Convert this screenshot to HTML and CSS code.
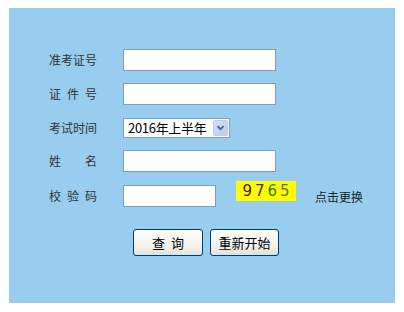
FILE: index.html
```html
<!DOCTYPE html>
<html lang="zh-CN">
<head>
<meta charset="utf-8">
<title>成绩查询</title>
<link rel="stylesheet" href="styles.css">
</head>
<body>
<div class="page">
  <form class="panel">
    <div class="rows">
      <div class="row">
        <label class="lbl">准考证号</label>
        <input class="txt" type="text">
      </div>
      <div class="row">
        <label class="lbl">证件号</label>
        <input class="txt" type="text">
      </div>
      <div class="row">
        <label class="lbl">考试时间</label>
        <div class="sel">
          <span class="sel-text">2016年上半年</span>
          <span class="sel-btn">
            <svg width="15" height="15" viewBox="0 0 15 15">
              <path d="M4 6 L7.5 9.5 L11 6" fill="none" stroke="#4d6185" stroke-width="2"/>
            </svg>
          </span>
        </div>
      </div>
      <div class="row">
        <label class="lbl">姓名</label>
        <input class="txt" type="text">
      </div>
      <div class="row row-code">
        <label class="lbl">校验码</label>
        <input class="txt short" type="text">
        <span class="captcha"><span class="d1">9</span><span class="d2">7</span><span class="d3">6</span><span class="d4">5</span></span>
        <span class="refresh">点击更换</span>
      </div>
    </div>
    <div class="actions">
      <button type="button" class="btn btn-q">查&nbsp;&nbsp;询</button>
      <button type="button" class="btn btn-r">重新开始</button>
    </div>
  </form>
</div>
</body>
</html>
```
FILE: styles.css
```css
html, body {
  margin: 0;
  padding: 0;
  background: #ffffff;
}
.page {
  padding: 8px 9px 9px 9px;
  font-family: "Noto Sans CJK SC", "Liberation Sans", sans-serif;
}
.panel {
  width: 386px;
  height: 295px;
  background: #98cdef;
  box-sizing: border-box;
  padding-top: 35px;
  margin: 0;
}
.rows {
  display: grid;
  grid-template-rows: 34px 34px 33px 33px 38px;
}
.row {
  display: flex;
  align-items: center;
  padding-left: 40px;
}
.lbl {
  width: 48px;
  margin-right: 26px;
  font-size: 12px;
  line-height: 14px;
  color: #333333;
  text-align: justify;
  text-align-last: justify;
}
.txt {
  width: 153px;
  height: 22px;
  box-sizing: border-box;
  border: 1px solid #7f9db9;
  background: #ffffff;
  margin: 0;
  padding: 0 2px;
  outline: none;
}
.txt.short {
  width: 93px;
}
.sel {
  width: 107px;
  height: 20px;
  box-sizing: border-box;
  border: 1px solid #7f9db9;
  background: #ffffff;
  display: flex;
  align-items: center;
  justify-content: space-between;
  padding: 0 1px 0 4px;
}
.sel-text {
  font-size: 13px;
  line-height: 16px;
  color: #000000;
  letter-spacing: -0.3px;
}
.sel-btn {
  width: 15px;
  height: 16px;
  box-sizing: border-box;
  border: 1px solid #b9cbf3;
  border-radius: 2px;
  background: linear-gradient(135deg, #d6e2fb 0%, #b6caf6 100%);
  display: flex;
  align-items: center;
  justify-content: center;
}
.sel-btn svg {
  display: block;
}
.captcha {
  width: 60px;
  height: 20px;
  background: #ffff00;
  margin-left: 20px;
  align-self: flex-start;
  margin-top: 4px;
  display: flex;
  align-items: center;
  justify-content: center;
  gap: 3px;
  font-family: "DejaVu Sans", sans-serif;
  font-size: 15px;
  line-height: 20px;
}
.d1 { color: #4a1500; }
.d2 { color: #4b2a08; }
.d3 { color: #3f7a10; }
.d4 { color: #6a6e1c; }
.refresh {
  margin-left: 19px;
  margin-top: 2px;
  font-size: 12px;
  line-height: 14px;
  color: #222222;
}
.actions {
  display: flex;
  gap: 7px;
  padding-left: 124px;
  margin-top: 14px;
}
.btn {
  height: 27px;
  box-sizing: border-box;
  border: 1px solid #003c74;
  border-radius: 3px;
  background: linear-gradient(180deg, #ffffff 0%, #f4f3ee 60%, #e3e1d6 100%);
  font-family: "Noto Sans CJK SC", sans-serif;
  font-size: 13px;
  line-height: 16px;
  color: #000000;
  padding: 0;
  margin: 0;
}
.btn-q { width: 70px; }
.btn-r { width: 69px; }
```
